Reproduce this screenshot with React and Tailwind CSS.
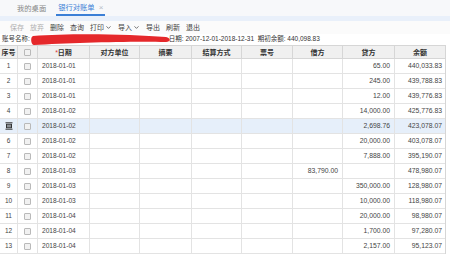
import { ChevronDown } from 'lucide-react';

const cols = [
  { key: 'no', label: '序号', w: 'w-[18px]' },
  { key: 'chk', label: '', w: 'w-[20px]' },
  { key: 'date', label: '日期', w: 'w-[52px]' },
  { key: 'party', label: '对方单位', w: 'w-[50px]' },
  { key: 'memo', label: '摘要', w: 'w-[52px]' },
  { key: 'settle', label: '结算方式', w: 'w-[50px]' },
  { key: 'ticket', label: '票号', w: 'w-[51px]' },
  { key: 'debit', label: '借方', w: 'w-[50px]' },
  { key: 'credit', label: '贷方', w: 'w-[52px]' },
  { key: 'balance', label: '余额', w: 'w-[50px]' },
];

const rows = [
  ['2018-01-01', '', '65.00', '440,033.83'],
  ['2018-01-01', '', '245.00', '439,788.83'],
  ['2018-01-01', '', '12.00', '439,776.83'],
  ['2018-01-02', '', '14,000.00', '425,776.83'],
  ['2018-01-02', '', '2,698.76', '423,078.07'],
  ['2018-01-02', '', '20,000.00', '403,078.07'],
  ['2018-01-02', '', '7,888.00', '395,190.07'],
  ['2018-01-03', '83,790.00', '', '478,980.07'],
  ['2018-01-03', '', '350,000.00', '128,980.07'],
  ['2018-01-03', '', '10,000.00', '118,980.07'],
  ['2018-01-04', '', '20,000.00', '98,980.07'],
  ['2018-01-04', '', '1,700.00', '97,280.07'],
  ['2018-01-04', '', '2,157.00', '95,123.07'],
];

const font = { fontFamily: '"Liberation Sans", "Noto Sans CJK SC", sans-serif' };

const Checkbox = () => (
  <span className="block w-[7px] h-[7px] border border-[#b9b9b9] bg-[#f1f1f1] rounded-[1px]"></span>
);

const EditIcon = () => (
  <svg width="8" height="8" viewBox="0 0 8 8" fill="none" stroke="#333" strokeWidth="1">
    <path d="M0.5 0.8H7.5M0.5 7.2H7.5" />
    <rect x="1.5" y="2.3" width="5" height="3.4" />
    <path d="M1.5 4H6.5" />
  </svg>
);

const ToolBtn = ({ children, disabled, menu }) => (
  <span className={`flex items-center ${disabled ? 'text-[#b0b0b0]' : 'text-[#444]'}`}>
    {children}
    {menu && <ChevronDown size={7} strokeWidth={2.5} className="ml-[1px]" />}
  </span>
);

export default function App() {
  return (
    <div className="w-[450px] h-[256px] overflow-hidden bg-white relative" style={font}>
      {/* tabs */}
      <div className="h-[16px] flex items-end bg-[#f7f8fa] text-[7.3px] leading-none">
        <span className="ml-[17px] mb-[4px] text-[#888]">我的桌面</span>
        <span className="ml-[10px] flex items-center h-[14px] border-b-2 border-[#3b7fd6] px-[2px]">
          <span className="text-[#3b7fd6]">银行对账单</span>
          <span className="ml-[4px] text-[#b6bcc6] text-[8px]">×</span>
        </span>
      </div>
      <div className="h-[5px] bg-[#e9f0fa]"></div>

      {/* toolbar */}
      <div className="h-[13px] flex items-center gap-[6px] pl-[10px] text-[7px] leading-none bg-[#fbfbfb]">
        <ToolBtn disabled>保存</ToolBtn>
        <ToolBtn disabled>放弃</ToolBtn>
        <ToolBtn>删除</ToolBtn>
        <ToolBtn>查询</ToolBtn>
        <ToolBtn menu>打印</ToolBtn>
        <ToolBtn menu>导入</ToolBtn>
        <ToolBtn>导出</ToolBtn>
        <ToolBtn>刷新</ToolBtn>
        <ToolBtn>退出</ToolBtn>
      </div>

      {/* info */}
      <div className="h-[11px] flex items-center text-[6.5px] leading-none text-[#333] relative">
        <span className="ml-[2px]">账号名称:</span>
        <span className="ml-[139px]">日期:&nbsp;2007-12-01-2018-12-31&nbsp;&nbsp;期初余额:&nbsp;440,098.83</span>
        <svg className="absolute left-[30px] top-[-3px]" width="145" height="16" viewBox="0 0 145 16">
          <path
            d="M3 5 C40 2, 100 3, 136 6 C141 7, 141 11, 136 11 C100 10, 40 12, 4 14 C1 14, 0 6, 3 5 Z"
            fill="#e5282b"
          />
        </svg>
      </div>

      {/* table */}
      <div className="w-[446px] border-r border-[#d6d6d6]">
        <div className="h-[14px] flex bg-[#f0f0f0] border-y border-[#d6d6d6] text-[7px] leading-none text-[#333] font-bold">
          {cols.map((c) => (
            <div key={c.key} className={`${c.w} shrink-0 flex items-center justify-center border-r border-[#d6d6d6] last:border-r-0`}>
              {c.key === 'chk' ? (
                <Checkbox />
              ) : c.key === 'date' ? (
                <span>
                  <span className="text-[#d33] font-normal">*</span>
                  {c.label}
                </span>
              ) : (
                c.label
              )}
            </div>
          ))}
        </div>
        {rows.map((r, i) => (
          <div
            key={i}
            className={`h-[15px] flex border-b border-[#e3e3e3] text-[#444] leading-none ${i === 4 ? 'bg-[#e6effa]' : 'bg-white'}`}
          >
            <div className="w-[18px] shrink-0 flex items-center justify-center border-r border-[#e3e3e3] text-[6.5px]">
              {i === 4 ? <EditIcon /> : i + 1}
            </div>
            <div className="w-[20px] shrink-0 flex items-center justify-center border-r border-[#e3e3e3]">
              <Checkbox />
            </div>
            <div className="w-[52px] shrink-0 flex items-center pl-[4px] border-r border-[#e3e3e3] text-[6.6px]">{r[0]}</div>
            <div className="w-[50px] shrink-0 border-r border-[#e3e3e3]"></div>
            <div className="w-[52px] shrink-0 border-r border-[#e3e3e3]"></div>
            <div className="w-[50px] shrink-0 border-r border-[#e3e3e3]"></div>
            <div className="w-[51px] shrink-0 border-r border-[#e3e3e3]"></div>
            <div className="w-[50px] shrink-0 flex items-center justify-end pr-[4px] border-r border-[#e3e3e3] text-[6.8px]">{r[1]}</div>
            <div className="w-[52px] shrink-0 flex items-center justify-end pr-[4px] border-r border-[#e3e3e3] text-[6.8px]">{r[2]}</div>
            <div className="w-[50px] shrink-0 flex items-center justify-end pr-[3px] text-[6.8px]">{r[3]}</div>
          </div>
        ))}
      </div>
    </div>
  );
}
